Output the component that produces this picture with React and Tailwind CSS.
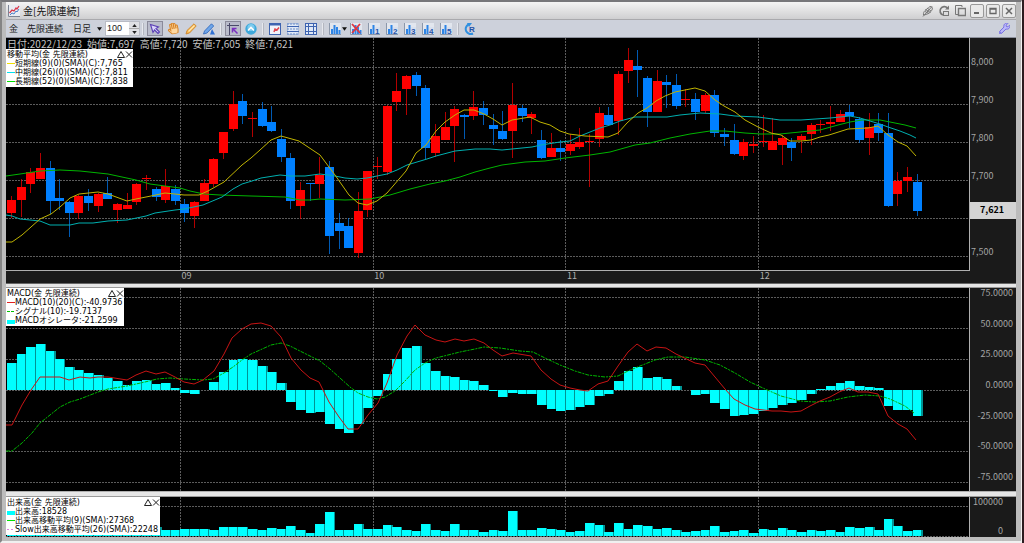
import { FaHandPaper, FaWrench } from 'react-icons/fa';

// [high, body top, body bottom, low, up?] in chart units
const CANDLES = [
  [196, 200, 213, 218, 1], [179, 187, 200, 217, 1], [168, 172, 184, 193, 1], [153, 168, 179, 179, 1], [161, 168, 201, 214, 0],
  [179, 198, 201, 210, 0], [201, 202, 213, 237, 0], [195, 196, 213, 219, 1], [189, 196, 203, 211, 0], [193, 194, 206, 212, 1],
  [177, 193, 199, 199, 0], [203, 204, 210, 223, 1], [193, 205, 209, 209, 1], [183, 184, 202, 205, 1], [175, 178, 179, 190, 1],
  [187, 189, 197, 201, 0], [169, 186, 200, 203, 1], [185, 189, 201, 205, 0], [199, 204, 213, 222, 0], [201, 202, 216, 228, 1],
  [179, 183, 201, 201, 1], [158, 159, 184, 187, 1], [132, 132, 153, 159, 1], [91, 104, 129, 131, 1], [94, 101, 116, 124, 0],
  [112, 118, 119, 137, 1], [102, 109, 126, 127, 0], [106, 122, 131, 132, 0], [129, 139, 157, 162, 0], [153, 158, 201, 209, 0],
  [182, 190, 206, 219, 1], [183, 183, 184, 201, 0], [157, 175, 184, 198, 1], [161, 167, 236, 254, 0], [213, 223, 231, 249, 0],
  [218, 226, 248, 248, 0], [192, 211, 253, 258, 1], [171, 171, 210, 217, 1], [157, 166, 167, 179, 1], [105, 106, 172, 175, 1],
  [73, 91, 102, 111, 1], [75, 76, 89, 115, 1], [72, 75, 86, 96, 0], [85, 88, 148, 159, 0], [124, 136, 153, 157, 1],
  [112, 127, 140, 140, 1], [106, 109, 126, 162, 1], [114, 115, 117, 139, 0], [91, 107, 116, 120, 1], [101, 108, 115, 125, 0],
  [114, 125, 129, 145, 0], [111, 131, 139, 140, 0], [83, 105, 131, 158, 1], [105, 108, 116, 122, 0], [112, 114, 118, 134, 1],
  [130, 140, 158, 159, 0], [133, 148, 157, 157, 1], [140, 148, 152, 161, 0], [134, 144, 151, 155, 1], [128, 142, 147, 149, 1],
  [134, 141, 142, 187, 1], [107, 113, 139, 147, 1], [107, 115, 125, 125, 0], [71, 74, 121, 135, 1], [48, 60, 71, 83, 1],
  [50, 66, 70, 97, 0], [76, 78, 112, 127, 0], [70, 81, 112, 112, 1], [75, 82, 85, 108, 0], [74, 85, 106, 109, 0],
  [89, 99, 100, 107, 1], [93, 99, 112, 120, 0], [93, 95, 111, 113, 1], [90, 95, 133, 137, 0], [128, 134, 137, 146, 0],
  [124, 140, 154, 155, 0], [139, 142, 156, 160, 1], [136, 144, 146, 153, 1], [115, 141, 142, 147, 1], [118, 141, 150, 150, 1],
  [135, 138, 145, 165, 1], [138, 142, 148, 161, 0], [134, 136, 140, 153, 1], [123, 125, 134, 145, 1], [120, 124, 125, 133, 1],
  [106, 122, 124, 131, 1], [110, 114, 122, 122, 1], [105, 112, 116, 128, 0], [117, 119, 140, 143, 0], [113, 127, 138, 155, 1],
  [113, 124, 133, 141, 0], [113, 133, 206, 207, 0], [172, 181, 194, 206, 1], [167, 177, 181, 192, 1], [174, 182, 211, 216, 0],
];

const MA_SHORT = '6,242 12,242 22,235 40,219 51,214 60,207 70,198 79,194 98,192 108,194 127,201 136,199 151,196 165,193 175,194 184,195 199,195 208,191 224,182 242,165 251,158 260,150 271,140 281,136 299,141 320,155 335,175 349,195 358,203 367,205 377,201 387,193 406,171 416,153 426,145 436,131 445,122 455,115 464,110 474,110 484,114 493,119 502,125 512,120 530,117 540,122 550,125 560,131 569,134 585,136 608,137 618,133 627,123 638,113 647,108 656,101 665,96 675,92 695,88 705,91 715,100 724,106 735,112 745,120 758,127 771,133 781,135 790,141 801,141 811,140 820,137 829,135 848,129 868,128 878,126 888,135 898,142 907,146 916,156';
const MA_MID = '6,215 12,216 20,219 40,221 50,225 70,225 79,223 93,223 108,221 127,220 146,216 155,213 175,210 184,209 203,205 222,197 233,189 242,184 252,181 261,178 280,175 290,176 305,176 320,174 335,176 345,178 357,179 367,178 387,174 397,170 407,165 417,162 427,159 436,156 455,151 475,149 490,149 502,150 522,148 532,147 541,145 560,142 570,141 580,136 590,132 600,128 610,125 620,121 635,117 667,117 680,115 700,113 720,114 735,116 758,117 780,120 801,120 830,118 850,116 860,118 870,121 880,124 888,127 900,131 910,135 916,138';
const MA_LONG = '6,176 20,174 40,171 60,170 80,171 108,174 122,177 136,180 150,184 165,186 180,188 190,191 204,194 220,195 251,196 285,197 300,200 310,200 320,199 345,200 370,199 390,195 410,189 430,184 445,181 460,177 475,172 490,168 502,165 525,162 545,161 565,158 590,155 610,152 635,145 650,143 670,138 690,134 710,131 725,131 745,133 760,134 780,134 800,132 820,130 838,125 850,122 862,120 880,120 890,122 905,125 916,128';

const MACD = '6,425 12,425 22,405 31,390 40,377 60,377 69,380 80,377 90,378 98,377 108,377 127,380 136,375 146,371 156,374 165,372 175,377 184,382 194,384 203,380 214,371 224,354 232,338 242,329 251,324 261,323 271,326 281,337 291,358 301,370 310,378 319,382 329,402 339,417 348,429 358,429 368,415 378,403 387,383 397,355 407,336 415,325 425,335 436,340 445,342 455,339 464,341 474,339 484,343 493,350 502,356 513,353 531,356 541,370 551,379 560,385 570,388 580,390 588,391 598,384 608,381 618,366 628,352 637,344 647,351 656,347 666,348 676,354 695,363 705,365 715,377 725,389 734,399 745,405 755,409 772,411 781,411 791,412 801,411 810,406 820,401 830,397 839,392 849,388 858,392 868,392 878,394 888,416 898,424 907,429 916,440';
const SIGNAL = '6,451 12,451 22,443 32,433 40,423 50,415 60,407 70,402 80,399 98,392 108,389 127,386 145,382 157,379 170,378 184,379 203,380 213,379 224,373 233,367 242,360 251,354 260,350 271,345 281,343 290,346 300,351 320,361 330,369 340,378 350,387 358,393 368,397 377,399 385,397 395,391 405,381 415,370 425,363 436,358 448,355 460,352 475,349 484,347 500,348 520,351 533,352 545,358 560,365 575,371 588,375 605,377 618,376 628,371 640,366 655,360 668,357 685,357 705,360 720,365 735,373 750,382 765,389 781,396 800,401 815,402 830,401 848,397 865,395 880,396 890,399 905,406 914,413';

const OSCILLATOR = [
  27, 36, 43, 46, 39, 31, 23, 20, 17, 15, 12, 9, 5, 9, 10, 6, 7, 2, -3, -4,
  0, 8, 18, 30, 31, 30, 24, 18, 7, -12, -20, -23, -22, -34, -39, -43, -34, -18, -6, 16,
  31, 42, 44, 27, 19, 14, 13, 10, 9, 5, -1, -7, -3, -4, -4, -15, -19, -21, -20, -17,
  -15, -6, -4, 9, 19, 23, 12, 13, 11, 4, 0, -5, -4, -13, -19, -26, -25, -24, -21, -18,
  -15, -13, -10, -4, 1, 4, 7, 9, 4, 3, 2, -16, -20, -20, -26,
];

const VOLUME = [
  6, 7, 9, 8, 7, 6, 8, 6, 7, 9, 6, 5, 7, 6, 8, 9, 6, 6, 7, 7,
  7, 6, 9, 9, 9, 7, 6, 8, 7, 10, 6, 3, 12, 24, 6, 6, 12, 7, 7, 11,
  9, 6, 5, 12, 6, 5, 12, 6, 6, 4, 6, 5, 25, 6, 6, 8, 7, 6, 4, 5,
  13, 11, 4, 13, 7, 11, 10, 7, 8, 6, 4, 5, 6, 10, 4, 5, 6, 3, 7, 6,
  8, 6, 4, 6, 5, 6, 4, 9, 8, 9, 6, 17, 10, 5, 6,
];

const MONTH_LINES = [180, 373, 565, 758];
const MONTHS = ['09', '10', '11', '12'];
const barX = (i) => Math.round(7 + i * 9.635);

function Grid({ rows, top, bottom }) {
  return (
    <g stroke="#5c5c5c" strokeDasharray="2 1" shapeRendering="crispEdges">
      {rows.map((y) => (
        <line key={y} x1="6" x2="969" y1={y} y2={y} />
      ))}
      {MONTH_LINES.map((x) => (
        <line key={x} x1={x} x2={x} y1={top} y2={bottom} />
      ))}
    </g>
  );
}

// cyan columns with a darker seam on the left of each one
function Bars({ values, base }) {
  return values.map((v, i) => {
    const x = barX(i);
    const y = v > 0 ? base - v : base;
    return (
      <g key={i} shapeRendering="crispEdges">
        <rect x={x} y={y} width="10" height={Math.abs(v)} fill="#009494" />
        <rect x={x} y={y} width={barX(i + 1) - x - 1} height={Math.abs(v)} fill="#00ffff" />
      </g>
    );
  });
}

function Plot({ top, height, label, children }) {
  return (
    <svg
      viewBox={`6 ${top} 963 ${height}`}
      preserveAspectRatio="none"
      className="absolute inset-0 w-full h-full"
      role="img"
      aria-label={label}
    >
      {children}
    </svg>
  );
}

function Line({ points, color, dash }) {
  return <polyline points={points} fill="none" stroke={color} strokeDasharray={dash} />;
}

function Legend({ title, rows, className }) {
  return (
    <div className={`absolute left-0 bg-white text-black text-[8px] leading-[9px] pt-px pb-px whitespace-nowrap font-['DejaVu_Sans','Noto_Sans_CJK_JP',sans-serif] ${className}`}>
      <div className="flex justify-between pl-px">
        <span>{title}</span>
        <span className="flex">
          <button aria-label="最小化" className="w-[8px] h-[9px]">
            <svg viewBox="0 0 8 9" className="w-full h-full" fill="none" stroke="#222">
              <path d="M.5 7.5 4 1.500l3.500 6z" />
            </svg>
          </button>
          <button aria-label="閉じる" className="w-[8px] h-[9px]">
            <svg viewBox="0 0 8 9" className="w-full h-full" fill="none" stroke="#222">
              <path d="m1 1.500 6 6m0-6-6 6" />
            </svg>
          </button>
        </span>
      </div>
      {rows.map((r) => (
        <div key={r.text} className="flex items-center">
          <svg viewBox="0 0 9 9" className="w-[9px] h-[9px] shrink-0">
            {r.block ? (
              <rect x="1" y="4" width="8" height="4" fill={r.color} />
            ) : (
              <line x1="1" x2="9" y1="4.500" y2="4.500" stroke={r.color} strokeDasharray={r.dash} />
            )}
          </svg>
          <span>{r.text}</span>
        </div>
      ))}
    </div>
  );
}

function ToolButton({ label, pressed, children }) {
  return (
    <button
      aria-label={label}
      title={label}
      className={
        pressed
          ? 'w-[16px] h-[15px] mx-px flex items-center justify-center border border-[#8a8a9a] bg-[#b9bccb]'
          : 'w-[18px] h-[16px] flex items-center justify-center'
      }
    >
      {children}
    </button>
  );
}

function Separator() {
  return (
    <span className="w-[6px] flex justify-center">
      <span className="w-[2px] h-[12px] bg-[#e6e8ee] border-r border-[#b4b7c0]" />
    </span>
  );
}

function BarsIcon({ number, crossed }) {
  return (
    <svg viewBox="0 0 12 12" className="w-[12px] h-[12px]">
      <rect x="1" y="0" width="11" height="11" fill="#e2e6ee" />
      <path d="M.5 0v11.500H12" fill="none" stroke="#8b97aa" />
      <path d="M2 11V6h2v5zM4.500 11V2h2v9zM7 11V4h2v7zM9.500 11V7h2v4z" fill="#2d84e6" />
      {crossed && <path d="m2 1 8 9m0-9-8 9" stroke="#e0353f" strokeWidth="1.800" />}
      {number && (
        <>
          <rect x="7" y="4" width="5" height="7" fill="#d8e0ee" />
          <text x="7" y="11" fontSize="8" fontWeight="700" fill="#2452a8" fontFamily="Liberation Sans, sans-serif">
            {number}
          </text>
        </>
      )}
    </svg>
  );
}

function GridIcon({ cols }) {
  return (
    <svg viewBox="0 0 12 12" className="w-[12px] h-[12px]">
      <rect x=".5" y=".5" width="11" height="11" fill="#dfe8f6" stroke={cols ? '#3d63b0' : '#a9bbdb'} />
      <path d="M0 3.500h12M0 8.500h12" stroke="#3d63b0" />
      {cols ? <path d="M3.500 0v12M8.500 0v12" stroke="#3d63b0" /> : <path d="M0 1h12M0 6h12M0 11h12" stroke="#6f8fc8" strokeDasharray="2 1" />}
    </svg>
  );
}

function TitleBar() {
  return (
    <header className="h-[17px] flex items-center pl-[2px] bg-linear-to-b from-[#f4f4f4] to-[#cfcfd1]">
      <svg viewBox="0 0 12 12" className="w-[12px] h-[12px]">
        <rect width="12" height="12" fill="#e9ecf2" />
        <path d="M.5 0v11.500H12" fill="none" stroke="#7c8494" />
        <path d="m1.500 8 2.500-3 2 1 2-3 1 1 2-3" fill="none" stroke="#d8374a" strokeWidth="1.300" />
        <path d="m2 10 2-2 2 1 2-3 1 1 2-3" fill="none" stroke="#4b83cc" />
      </svg>
      <h1 className="ml-[3px] text-[10px] leading-[14px] text-[#111]">金[先限連続]</h1>
      <div className="ml-auto flex items-center text-[#777]">
        <button aria-label="リンク" className="w-[16px] flex justify-center">
          <svg viewBox="0 0 12 12" className="w-[12px] h-[12px]" fill="none" stroke="currentColor">
            <path d="M1.500 10C1 6 4 5 8 1.500c2 0 2.500 1 2.300 2.500C9 8 5 9.500 1.500 10z" />
            <path d="m3.500 4.500 5 3M5 3l4 3M3 6.500l4 2M1 11.500l9-10" />
          </svg>
        </button>
        <button aria-label="更新" className="w-[16px] flex justify-center">
          <svg viewBox="0 0 12 12" className="w-[12px] h-[12px]" fill="none" stroke="currentColor">
            <path d="M9.500 3A4.300 4.300 0 1 0 5 10" strokeWidth="1.700" />
            <path d="M11 .5v4H7z" fill="currentColor" stroke="none" />
            <rect x="5.500" y="6.500" width="5" height="4" />
          </svg>
        </button>
        <button aria-label="複製" className="w-[16px] mr-[2px] flex justify-center">
          <svg viewBox="0 0 12 12" className="w-[12px] h-[12px]" fill="none" stroke="currentColor">
            <path d="M8 2V.500H1.500v9H4" />
            <path d="M4.500 3.500h7v7h-7z" strokeWidth="1.400" />
          </svg>
        </button>
        <div className="flex gap-[2px]">
          <button aria-label="最小化" className="w-[14px] h-[14px] rounded-[2px] border border-[#999] bg-[#e9e9e9] flex items-center justify-center">
            <svg viewBox="0 0 8 8" className="w-[8px] h-[8px]"><path d="M1 6h5" stroke="#666" strokeWidth="2" /></svg>
          </button>
          <button aria-label="最大化" className="w-[14px] h-[14px] rounded-[2px] border border-[#999] bg-[#e9e9e9] flex items-center justify-center">
            <svg viewBox="0 0 8 8" className="w-[8px] h-[8px]"><path d="M1 1.500h6v5H1zM1 2h6" fill="none" stroke="#666" strokeWidth="1.300" /></svg>
          </button>
          <button aria-label="閉じる" className="w-[14px] h-[14px] rounded-[2px] border border-[#999] bg-[#e9e9e9] flex items-center justify-center">
            <svg viewBox="0 0 8 8" className="w-[8px] h-[8px]"><path d="m1 1 6 6m0-6L1 7" stroke="#666" strokeWidth="1.500" /></svg>
          </button>
        </div>
      </div>
    </header>
  );
}

function ToolBar() {
  return (
    <div className="h-[19px] flex items-center border-y border-t-[#a9a9ad] border-b-[#8d919c] bg-[#cdd1db] pl-[3px] text-[9px] leading-[12px] text-[#222]">
      <span>金</span>
      <span className="ml-[9px]">先限連続</span>
      <label className="relative ml-[10px] flex items-center">
        <span className="sr-only">足種</span>
        <select className="appearance-none w-[29px] h-[17px] leading-[17px] bg-transparent text-[9px]" defaultValue="日足">
          <option>日足</option>
          <option>週足</option>
        </select>
        <svg viewBox="0 0 6 4" className="absolute right-0 w-[5px] h-[4px] pointer-events-none"><path d="M0 0h6L3 4z" fill="#111" /></svg>
      </label>
      <label className="ml-[3px] flex h-[15px] bg-white border border-[#b9bcc5]">
        <span className="sr-only">本数</span>
        <input type="text" defaultValue="100" className="w-[23px] h-[13px] pl-px text-[9px] leading-[13px] bg-white font-['Liberation_Sans',sans-serif]" />
        <span className="w-[10px] flex flex-col bg-[#dfe0e4]">
          <button aria-label="増やす" className="flex-1 flex items-center justify-center border-b border-[#aaa]">
            <svg viewBox="0 0 6 4" className="w-[5px] h-[3px]"><path d="M0 4h6L3 0z" fill="#222" /></svg>
          </button>
          <button aria-label="減らす" className="flex-1 flex items-center justify-center">
            <svg viewBox="0 0 6 4" className="w-[5px] h-[3px]"><path d="M0 0h6L3 4z" fill="#222" /></svg>
          </button>
        </span>
      </label>
      <Separator />
      <ToolButton label="選択" pressed>
        <svg viewBox="0 0 12 12" className="w-[12px] h-[12px]">
          <path d="m1.500 1.500 8 2.500-2.500 1.500 3.500 3.500-1.500 1.500L5.500 7 4 9.500z" fill="#d9d4fa" stroke="#5b3fb5" strokeWidth="1.100" />
        </svg>
      </ToolButton>
      <ToolButton label="移動">
        <FaHandPaper className="w-[12px] h-[11px] text-[#ffd9a0] -rotate-12 [&_path]:stroke-[#d8862a] [&_path]:[stroke-width:50]" />
      </ToolButton>
      <ToolButton label="描画">
        <svg viewBox="0 0 12 12" className="w-[12px] h-[12px]">
          <path d="m1 11 1-3.500L9 .800 11.200 3 4.500 10z" fill="#f8b64a" stroke="#c97f26" strokeWidth=".8" />
          <path d="m3.500 8.500 6-6" stroke="#ffe7b3" strokeWidth="1.200" />
        </svg>
      </ToolButton>
      <ToolButton label="注釈">
        <svg viewBox="0 0 12 12" className="w-[12px] h-[12px]">
          <path d="m.5 11 1-3L8.500.800 10.700 3 4 10z" fill="#6fa6ea" stroke="#2b62b8" strokeWidth=".8" />
          <path d="M7 11.500 9 6l3 5.500z" fill="#2f6fd2" />
        </svg>
      </ToolButton>
      <Separator />
      <ToolButton label="十字線" pressed>
        <svg viewBox="0 0 12 12" className="w-[12px] h-[12px]" fill="none">
          <path d="M0 2.500h12M2.500 0v12" stroke="#4a4a6a" />
          <path d="M5.500 5.500 10.500 10.500M5.500 9.500v-4h4" stroke="#7a30c0" strokeWidth="1.500" />
        </svg>
      </ToolButton>
      <ToolButton label="上へ">
        <svg viewBox="0 0 12 12" className="w-[12px] h-[12px]" fill="none">
          <circle cx="6" cy="6" r="5.700" fill="#3fa9dc" />
          <circle cx="6" cy="4.500" r="3.600" fill="#7ccbee" />
          <path d="m3 7.500 3-3 3 3" stroke="#fff" strokeWidth="1.600" />
        </svg>
      </ToolButton>
      <Separator />
      <ToolButton label="チャート設定">
        <svg viewBox="0 0 12 12" className="w-[12px] h-[12px]" fill="none">
          <rect x=".5" y=".5" width="11" height="11" fill="#f0f3fa" stroke="#3d63b0" />
          <path d="M0 1.500h12" stroke="#3d63b0" strokeWidth="2" />
          <path d="m5 9 1-3 2 1 2-2.500" stroke="#e0454f" strokeWidth="1.500" />
        </svg>
      </ToolButton>
      <ToolButton label="横線"><GridIcon /></ToolButton>
      <ToolButton label="格子"><GridIcon cols /></ToolButton>
      <Separator />
      <button aria-label="指標" className="w-[21px] h-[16px] flex items-center justify-end gap-px">
        <BarsIcon />
        <svg viewBox="0 0 6 4" className="w-[5px] h-[4px]"><path d="M0 0h6L3 4z" fill="#111" /></svg>
      </button>
      <ToolButton label="指標を消す"><BarsIcon crossed /></ToolButton>
      {['1', '2', '3', '4', '5'].map((n) => (
        <ToolButton key={n} label={`指標${n}`}><BarsIcon number={n} /></ToolButton>
      ))}
      <Separator />
      <ToolButton label="再読込">
        <svg viewBox="0 0 12 12" className="w-[12px] h-[12px]" fill="none">
          <path d="M4.500 1.500A4.600 4.600 0 1 0 9 10.500" stroke="#2f8fe0" strokeWidth="2" />
          <path d="M3 0h5L5 4z" fill="#2f8fe0" />
          <text x="5" y="9" fontSize="8" fontWeight="700" fill="#2452a8" fontFamily="Liberation Sans, sans-serif">R</text>
        </svg>
      </ToolButton>
      <button aria-label="設定" className="ml-auto mr-[6px]">
        <FaWrench className="w-[11px] h-[11px] text-[#bcb8fb] [&_path]:stroke-[#6a62e0] [&_path]:[stroke-width:40]" />
      </button>
    </div>
  );
}

export default function App() {
  return (
    <div className="h-screen min-h-[400px] flex bg-[#2c1c20] text-[9px] font-['Noto_Sans_CJK_JP',sans-serif]">
      <div className="flex-1 min-w-0 mr-[2px] flex flex-col border-t-2 border-t-[#77777a] border-l-2 border-l-[#858585] border-r border-r-[#f2f2f2] border-b-2 border-b-[#f0f0f0] bg-[#bcbcbc] pl-[4px] pr-[5px] pb-[4px]">
        <TitleBar />
        <ToolBar />

        {/* price */}
        <section className="flex-[245_1_0px] min-h-0 flex bg-[#1a1a1a]">
          <div className="flex-1 min-w-0 flex flex-col">
            <div className="relative flex-1 bg-black border-r border-b border-[#b0b0b0]">
              <Plot top={38} height={232} label="価格チャート">
                <Grid rows={[67.5, 104.5, 142.5, 180.5, 218.5, 256.5]} top={38} bottom={270} />
                {CANDLES.map(([high, top, bottom, low, up], i) => (
                  <g key={i} fill={up ? '#ff0000' : '#0080ff'} shapeRendering="crispEdges">
                    <rect x={barX(i) + 4} y={high} width="1" height={Math.max(low - high, 1)} opacity=".7" />
                    <rect x={barX(i)} y={top} width="9" height={Math.max(bottom - top, 1)} />
                  </g>
                ))}
                <Line points={MA_LONG} color="#00b400" />
                <Line points={MA_MID} color="#00b0b0" />
                <Line points={MA_SHORT} color="#c0b400" />
              </Plot>
              <p className="absolute left-px top-px flex gap-[5px] text-[10px] leading-[10px] text-[#c4c4c4] whitespace-nowrap">
                <span>日付:2022/12/23</span>
                <span>始値:7,697</span>
                <span>高値:7,720</span>
                <span>安値:7,605</span>
                <span>終値:7,621</span>
              </p>
              <Legend
                className="top-[11px] w-[127px]"
                title="移動平均(金 先限連続)"
                rows={[
                  { text: '短期線(9)(0)(SMA)(C):7,765', color: '#f0e000' },
                  { text: '中期線(26)(0)(SMA)(C):7,811', color: '#00e0f0' },
                  { text: '長期線(52)(0)(SMA)(C):7,838', color: '#00e000' },
                ]}
              />
            </div>
            <div className="h-[12px] flex leading-[10px] text-[#b0b0b0]">
              <span className="w-[18.1%]" />
              {MONTHS.map((m) => (
                <span key={m} className="w-1/5 pl-px">{m}</span>
              ))}
            </div>
          </div>
          <div className="relative w-[46px] flex flex-col text-[#a4a4a4] leading-[10px]">
            <span className="flex-[5_1_0px]" />
            {['8,000', '7,900', '7,800', '7,700', '', '7,500'].map((p, i) => (
              <span key={i} className="flex-[38_1_0px] flex items-center pl-px">{p}</span>
            ))}
            <span className="flex-[12_1_0px]" />
            <strong className="absolute inset-x-0 top-[67%] h-[17px] pl-[10px] leading-[16px] bg-[#d4d4d4] text-black">7,621</strong>
          </div>
        </section>

        <div className="h-[5px] border-y border-t-[#666] border-b-[#9a9a9a] bg-[#e6e6e6]" />

        {/* MACD */}
        <section className="flex-[203_1_0px] min-h-0 flex bg-[#1a1a1a]">
          <div className="relative flex-1 min-w-0 bg-black border-r border-[#b0b0b0]">
            <Plot top={288} height={203} label="MACD">
              <Grid rows={[297.5, 328.5, 359.5, 390.5, 421.5, 451.5, 482.5]} top={288} bottom={491} />
              <Bars values={OSCILLATOR} base={390} />
              <Line points={SIGNAL} color="#00b400" dash="4 1 2 1" />
              <Line points={MACD} color="#c81414" />
            </Plot>
            <Legend
              className="top-0 w-[118px]"
              title="MACD(金 先限連続)"
              rows={[
                { text: 'MACD(10)(20)(C):-40.9736', color: '#e02020' },
                { text: 'シグナル(10):-19.7137', color: '#00c000', dash: '3 1' },
                { text: 'MACDオシレータ:-21.2599', color: '#00ffff', block: true },
              ]}
            />
          </div>
          <div className="w-[46px] pb-[9px] pr-[3px] flex flex-col justify-between items-end text-[#a4a4a4] leading-[10px]">
            {['75.0000', '50.0000', '25.0000', '0.0000', '-25.0000', '-50.0000', '-75.0000'].map((v) => (
              <span key={v}>{v}</span>
            ))}
          </div>
        </section>

        <div className="h-[6px] border-y border-t-[#b0b0b0] border-b-[#9a9a9a] bg-[#e6e6e6]" />

        {/* volume */}
        <section className="flex-[40_1_0px] min-h-0 flex bg-[#1a1a1a]">
          <div className="relative flex-1 min-w-0 bg-black border-r border-[#b0b0b0]">
            <Plot top={497} height={40} label="出来高">
              <Grid rows={[506.5, 536.5]} top={497} bottom={537} />
              <Bars values={VOLUME} base={536} />
            </Plot>
            <Legend
              className="top-0 w-[154px]"
              title="出来高(金 先限連続)"
              rows={[
                { text: '出来高:18528', color: '#00ffff', block: true },
                { text: '出来高移動平均(9)(SMA):27368', color: '#00e000' },
                { text: 'Slow出来高移動平均(26)(SMA):22248', color: '#e080e0', dash: '2 2' },
              ]}
            />
          </div>
          <div className="w-[46px] pb-px pr-[13px] flex flex-col justify-between items-end text-[#a4a4a4] leading-[10px]">
            <span>100000</span>
            <span>0</span>
          </div>
        </section>
      </div>
    </div>
  );
}
